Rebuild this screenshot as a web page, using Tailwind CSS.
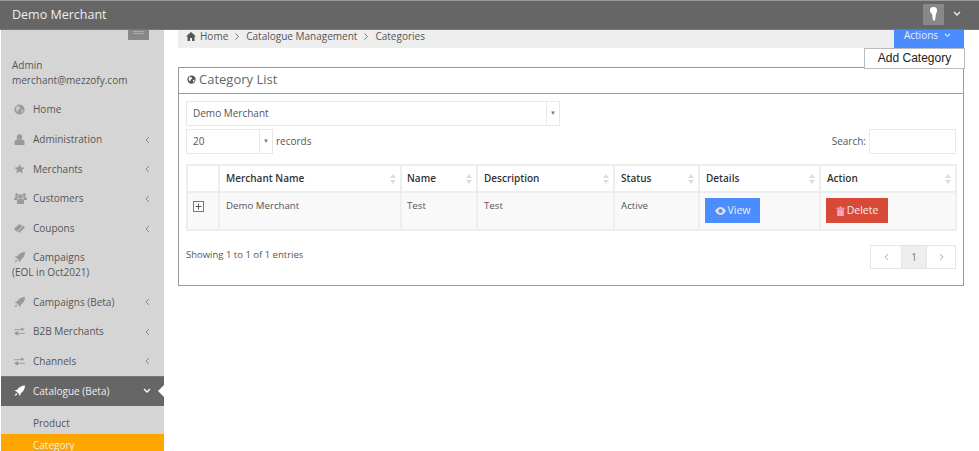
<!DOCTYPE html>
<html lang="en">
<head>
    <meta charset="UTF-8">
    <title>Category List</title>
    <script src="https://cdn.jsdelivr.net/npm/@tailwindcss/browser@4"></script>
</head>
<body class="h-[451px] w-[979px] overflow-hidden bg-white font-['Open_Sans',sans-serif] text-[10px] text-[#555]">
    <!-- Top bar -->
    <header class="flex h-[30px] items-center justify-between border-t border-b border-t-[#999] border-b-[#777] bg-[#666] pl-3 pr-[18px]">
        <span class="text-[12.500px] text-[#eee]">Demo Merchant</span>
        <div class="flex items-center gap-[9px] pb-[2px]">
            <div class="flex h-[21px] w-[21px] items-center justify-center bg-[#888]">
                <svg width="7" height="14" viewBox="0 0 7 14"><path d="M0 3c0-2 1-3 3.500-3S7 1 7 3 6.500 6 6 7l-1 6.500H3L2 7C.8 6 0 5 0 3z" fill="#fff"/></svg>
            </div>
            <svg width="8" height="6" viewBox="0 0 8 6"><path d="M1 1l3 3 3-3" fill="none" stroke="#eee" stroke-width="1.300"/></svg>
        </div>
    </header>

    <div class="flex h-[421px]">
        <!-- Sidebar -->
        <aside class="ml-px flex w-[163px] shrink-0 flex-col overflow-hidden bg-[#d5d5d5]">
            <div class="flex shrink-0 justify-end pr-[15px]">
                <div class="flex h-[10px] w-[21px] items-start justify-center bg-[#888]"><div class="mt-px h-[3px] w-[11px] border-y border-[#aaa]"></div></div>
            </div>
            <div class="mb-[7px] mt-[18px] shrink-0 pl-[11px] leading-[15px]">Admin<br>merchant@mezzofy.com</div>

            <a class="flex h-[29.7px] shrink-0 items-center pl-[13px] pr-[14px]">
                <svg class="mr-[8px] w-[11px] shrink-0" width="11" height="11" viewBox="0 0 12 12"><circle cx="6" cy="6" r="5.500" fill="#999"/><path d="M3 2l3 1 1 2-2 1-1 3-2-3zM8 7l2-1 0 2-2 2z" fill="#ccc"/></svg>
                <span class="flex-1">Home</span>
            </a>
            <a class="flex h-[29.7px] shrink-0 items-center pl-[13px] pr-[14px]">
                <svg class="mr-[8px] w-[11px] shrink-0" width="10" height="11" viewBox="0 0 10 11"><circle cx="5" cy="3" r="2.700" fill="#999"/><path d="M0 11V8c0-1.500 1.500-2.500 2.500-2.500h5C8.500 5.500 10 6.500 10 8v3z" fill="#999"/></svg>
                <span class="flex-1">Administration</span>
                <svg width="5" height="8" viewBox="0 0 5 8"><path d="M4 1L1 4l3 3" fill="none" stroke="#888"/></svg>
            </a>
            <a class="flex h-[29.7px] shrink-0 items-center pl-[13px] pr-[14px]">
                <svg class="mr-[8px] w-[11px] shrink-0" width="12" height="12" viewBox="0 0 12 12"><path d="M6 .500l1.700 3.600 3.900.5-2.900 2.700.8 3.900L6 8.800l-3.500 1.900.8-3.900L.400 4.600l3.900-.5z" fill="#999"/></svg>
                <span class="flex-1">Merchants</span>
                <svg width="5" height="8" viewBox="0 0 5 8"><path d="M4 1L1 4l3 3" fill="none" stroke="#888"/></svg>
            </a>
            <a class="flex h-[29.7px] shrink-0 items-center pl-[13px] pr-[14px]">
                <svg class="mr-[8px] w-[13px] shrink-0" width="13" height="11" viewBox="0 0 13 11"><circle cx="2.800" cy="2" r="1.700" fill="#999"/><circle cx="10.200" cy="2" r="1.700" fill="#999"/><circle cx="6.500" cy="3.500" r="2.200" fill="#999"/><path d="M0 7c0-2 1-3 2.500-3H4L3 7zM13 7c0-2-1-3-2.500-3H9l1 3zM3 11V8c0-1.500 1-2 2-2h3c1 0 2 .500 2 2v3z" fill="#999"/></svg>
                <span class="-ml-[2px] flex-1">Customers</span>
                <svg width="5" height="8" viewBox="0 0 5 8"><path d="M4 1L1 4l3 3" fill="none" stroke="#888"/></svg>
            </a>
            <a class="flex h-[29.7px] shrink-0 items-center pl-[13px] pr-[14px]">
                <svg class="mr-[8px] w-[11px] shrink-0" width="12" height="11" viewBox="0 0 12 11"><path d="M0 6l5-5h3v3l-5 5zM4 9l5-5V2l3 2-6 6z" fill="#999"/></svg>
                <span class="flex-1">Coupons</span>
                <svg width="5" height="8" viewBox="0 0 5 8"><path d="M4 1L1 4l3 3" fill="none" stroke="#888"/></svg>
            </a>
            <a class="block h-[44px] shrink-0 pl-[11px] pt-[7px] leading-[15px]">
                <span class="flex items-center pl-[2px]">
                    <svg class="mr-[8px] w-[11px] shrink-0" width="11" height="11" viewBox="0 0 11 11"><path d="M11 0C7.500.200 5 1.500 3.500 4L.500 5l2 1L5 8.500l1 2 1-3C9.500 6 10.800 3.500 11 0zM2 7.500L.500 10.500 3.500 9z" fill="#999"/></svg>
                    Campaigns
                </span>
                (EOL in Oct2021)
            </a>
            <a class="flex h-[29.5px] shrink-0 items-center pl-[13px] pr-[14px]">
                <svg class="mr-[8px] w-[11px] shrink-0" width="11" height="11" viewBox="0 0 11 11"><path d="M11 0C7.500.200 5 1.500 3.500 4L.500 5l2 1L5 8.500l1 2 1-3C9.500 6 10.800 3.500 11 0zM2 7.500L.500 10.500 3.500 9z" fill="#999"/></svg>
                <span class="flex-1">Campaigns (Beta)</span>
                <svg width="5" height="8" viewBox="0 0 5 8"><path d="M4 1L1 4l3 3" fill="none" stroke="#888"/></svg>
            </a>
            <a class="flex h-[29.5px] shrink-0 items-center pl-[13px] pr-[14px]">
                <svg class="mr-[8px] w-[11px] shrink-0" width="12" height="9" viewBox="0 0 12 9"><path d="M0 2.500h10M8 .500l3 2H8zM12 6.500H2M4 4.500l-3 2h3zM4 8.500l-3-2h3z" fill="#999" stroke="#999"/></svg>
                <span class="flex-1">B2B Merchants</span>
                <svg width="5" height="8" viewBox="0 0 5 8"><path d="M4 1L1 4l3 3" fill="none" stroke="#888"/></svg>
            </a>
            <a class="flex h-[29.5px] shrink-0 items-center pl-[13px] pr-[14px]">
                <svg class="mr-[8px] w-[11px] shrink-0" width="12" height="9" viewBox="0 0 12 9"><path d="M0 2.500h10M8 .500l3 2H8zM12 6.500H2M4 4.500l-3 2h3zM4 8.500l-3-2h3z" fill="#999" stroke="#999"/></svg>
                <span class="flex-1">Channels</span>
                <svg width="5" height="8" viewBox="0 0 5 8"><path d="M4 1L1 4l3 3" fill="none" stroke="#888"/></svg>
            </a>
            <a class="relative flex h-[30px] shrink-0 items-center border-t border-[#777] bg-[#666] pl-[13px] pr-[13px] text-[#eee]">
                <svg class="mr-[8px] w-[11px] shrink-0" width="12" height="12" viewBox="0 0 11 11"><path d="M11 0C7.500.200 5 1.500 3.500 4L.500 5l2 1L5 8.500l1 2 1-3C9.500 6 10.800 3.500 11 0zM2 7.500L.500 10.500 3.500 9z" fill="#fff"/></svg>
                <span class="flex-1">Catalogue (Beta)</span>
                <svg width="8" height="6" viewBox="0 0 8 6"><path d="M1 1l3 3 3-3" fill="none" stroke="#fff" stroke-width="1.300"/></svg>
                <span class="absolute right-0 top-[8px] h-0 w-0 border-y-[6px] border-r-[6px] border-y-transparent border-r-white"></span>
            </a>
            <a class="flex h-[28px] shrink-0 items-center pl-[32px] pt-[7px]">Product</a>
            <a class="flex h-[18px] shrink-0 items-center bg-[#ffa500] pl-[32px] pt-[5px] text-[#eee]">Category</a>
        </aside>

        <!-- Main content -->
        <main class="relative w-[800px] shrink-0 pl-[14px]">
            <div class="flex h-[18px] w-[786px] items-start">
                <nav class="flex h-[18px] w-[716px] items-center gap-[7px] bg-[#eee] pb-[5px] pl-2 text-[#555]">
                    <span class="flex items-center gap-[4px]">
                        <svg width="10" height="9" viewBox="0 0 10 9"><path d="M5 0l5 4.500H8.500V9H6V6H4v3H1.500V4.500H0z" fill="#555"/></svg>
                        Home
                    </span>
                    <svg width="4" height="7" viewBox="0 0 4 7"><path d="M.5 .5l3 3-3 3" fill="none" stroke="#777"/></svg>
                    <span>Catalogue Management</span>
                    <svg width="4" height="7" viewBox="0 0 4 7"><path d="M.5 .5l3 3-3 3" fill="none" stroke="#777"/></svg>
                    <span>Categories</span>
                </nav>
                <button class="flex h-[18px] w-[70px] items-center justify-center gap-[6px] bg-[#4b8dff] pb-[7px] pr-[3px] text-[#eee]">
                    Actions
                    <svg width="7" height="5" viewBox="0 0 8 6"><path d="M1 1l3 3 3-3" fill="none" stroke="#eee" stroke-width="1.300"/></svg>
                </button>
            </div>

            <!-- Dropdown over the panel -->
            <div class="absolute left-[700px] top-[18px] z-10 flex h-[21px] w-[101px] items-center justify-center border border-[#bbb] bg-white pb-[2px] font-['Liberation_Sans',sans-serif] text-[12px] text-[#222]">Add Category</div>

            <!-- Panel -->
            <section class="mt-[19px] flex h-[219px] w-[786px] flex-col border border-[#999]">
                <div class="flex h-[26px] shrink-0 items-center gap-[3px] border-b border-[#999] pb-[2px] pl-2 text-[13px] text-[#666]">
                    <svg width="9" height="9" viewBox="0 0 12 12"><circle cx="6" cy="6" r="5.500" fill="#555"/><path d="M3 2l3 1 1 2-2 1-1 3-2-3zM8 7l2-1 0 2-2 2z" fill="#fff"/></svg>
                    Category List
                </div>
                <div class="flex flex-1 flex-col px-[7px] pt-[7px]">
                    <div class="flex h-[25px] w-[374px] items-center border border-[#e8e8e8] pl-[6px]">
                        <span class="flex-1">Demo Merchant</span>
                        <span class="flex h-full w-[13px] items-center justify-center border-l border-[#e8e8e8] text-[6px] text-[#777]">▼</span>
                    </div>
                    <div class="mt-[3px] flex h-[25px] items-center justify-between">
                        <div class="flex h-full items-center gap-[3px]">
                            <div class="flex h-full w-[87px] items-center border border-[#e8e8e8] pl-[6px]">
                                <span class="flex-1">20</span>
                                <span class="flex h-full w-[13px] items-center justify-center border-l border-[#e8e8e8] text-[6px] text-[#777]">▼</span>
                            </div>
                            records
                        </div>
                        <div class="flex h-full items-center gap-[3px]">
                            Search:
                            <div class="h-full w-[87px] border border-[#e8e8e8]"></div>
                        </div>
                    </div>

                    <table class="mt-[10px] w-[769px] table-fixed border-collapse border border-[#e5e5e5] text-left">
                        <colgroup>
                            <col class="w-[32px]"><col class="w-[182px]"><col class="w-[76px]"><col class="w-[137px]"><col class="w-[85px]"><col class="w-[121px]"><col class="w-[136px]">
                        </colgroup>
                        <thead>
                            <tr class="h-[27px] text-[#333]">
                                <th class="border-2 border-[#eee]"></th>
                                <th class="border-2 border-[#eee] pl-[6px] font-semibold"><span class="flex items-center justify-between pr-[4px]">Merchant Name<svg width="6" height="10" viewBox="0 0 6 10"><path d="M3 0l3 4H0zM3 10l3-4H0z" fill="#ddd"/></svg></span></th>
                                <th class="border-2 border-[#eee] pl-[5px] font-semibold"><span class="flex items-center justify-between pr-[4px]">Name<svg width="6" height="10" viewBox="0 0 6 10"><path d="M3 0l3 4H0zM3 10l3-4H0z" fill="#ddd"/></svg></span></th>
                                <th class="border-2 border-[#eee] pl-[6px] font-semibold"><span class="flex items-center justify-between pr-[4px]">Description<svg width="6" height="10" viewBox="0 0 6 10"><path d="M3 0l3 4H0zM3 10l3-4H0z" fill="#ddd"/></svg></span></th>
                                <th class="border-2 border-[#eee] pl-[6px] font-semibold"><span class="flex items-center justify-between pr-[4px]">Status<svg width="6" height="10" viewBox="0 0 6 10"><path d="M3 0l3 4H0zM3 10l3-4H0z" fill="#ddd"/></svg></span></th>
                                <th class="border-2 border-[#eee] pl-[6px] font-semibold"><span class="flex items-center justify-between pr-[4px]">Details<svg width="6" height="10" viewBox="0 0 6 10"><path d="M3 0l3 4H0zM3 10l3-4H0z" fill="#ddd"/></svg></span></th>
                                <th class="border-2 border-[#eee] pl-[6px] font-semibold"><span class="flex items-center justify-between pr-[4px]">Action<svg width="6" height="10" viewBox="0 0 6 10"><path d="M3 0l3 4H0zM3 10l3-4H0z" fill="#ddd"/></svg></span></th>
                            </tr>
                        </thead>
                        <tbody>
                            <tr class="h-[38px] bg-[#f9f9f9] align-top text-[9.700px]">
                                <td class="border-2 border-[#eee] pl-[5px] pt-[8px]">
                                    <svg width="11" height="11" viewBox="0 0 11 11"><rect x=".5" y=".5" width="10" height="10" fill="#fff" stroke="#777"/><path d="M2.500 5.500h6M5.500 2.500v6" stroke="#555"/></svg>
                                </td>
                                <td class="border-2 border-[#eee] pl-[6px] pt-[6px]">Demo Merchant</td>
                                <td class="border-2 border-[#eee] pl-[5px] pt-[6px]">Test</td>
                                <td class="border-2 border-[#eee] pl-[6px] pt-[6px]">Test</td>
                                <td class="border-2 border-[#eee] pl-[6px] pt-[6px]">Active</td>
                                <td class="border-2 border-[#eee] pl-[5px] pt-[5px]">
                                    <button class="flex h-[25px] w-[55px] items-center justify-center gap-[2px] bg-[#4b8dff] text-[10.500px] text-[#eee]">
                                        <svg width="11" height="8" viewBox="0 0 11 8"><path d="M0 4c1.500-2.500 3.500-4 5.500-4S9.500 1.500 11 4C9.500 6.500 7.500 8 5.500 8S1.500 6.500 0 4z" fill="#ddd"/><circle cx="5.500" cy="4" r="2" fill="#4b8dff"/></svg>
                                        View
                                    </button>
                                </td>
                                <td class="border-2 border-[#eee] pl-[5px] pt-[5px]">
                                    <button class="flex h-[25px] w-[62px] items-center justify-center gap-[2px] bg-[#d84a38] text-[10.500px] text-[#eee]">
                                        <svg width="9" height="10" viewBox="0 0 8 9"><path d="M0 1.500h8v1H0zM3 .500h2v1H3zM1 3h6v6H1z" fill="#f6a5c0"/></svg>
                                        Delete
                                    </button>
                                </td>
                            </tr>
                        </tbody>
                    </table>

                    <div class="mt-[14px] flex items-start justify-between">
                        <span class="pt-[3px] text-[9.500px]">Showing 1 to 1 of 1 entries</span>
                        <div class="flex h-[24px] w-[86px] border border-[#e5e5e5] text-[#777]">
                            <span class="flex w-[31px] items-center justify-center border-r border-[#e5e5e5]"><svg width="5" height="8" viewBox="0 0 5 8"><path d="M4 1L1 4l3 3" fill="none" stroke="#aaa"/></svg></span>
                            <span class="flex w-[24px] items-center justify-center bg-[#eee] text-[10px]">1</span>
                            <span class="flex flex-1 items-center justify-center border-l border-[#e5e5e5]"><svg width="5" height="8" viewBox="0 0 5 8"><path d="M1 1l3 3-3 3" fill="none" stroke="#aaa"/></svg></span>
                        </div>
                    </div>
                </div>
            </section>
        </main>
    </div>
</body>
</html>
